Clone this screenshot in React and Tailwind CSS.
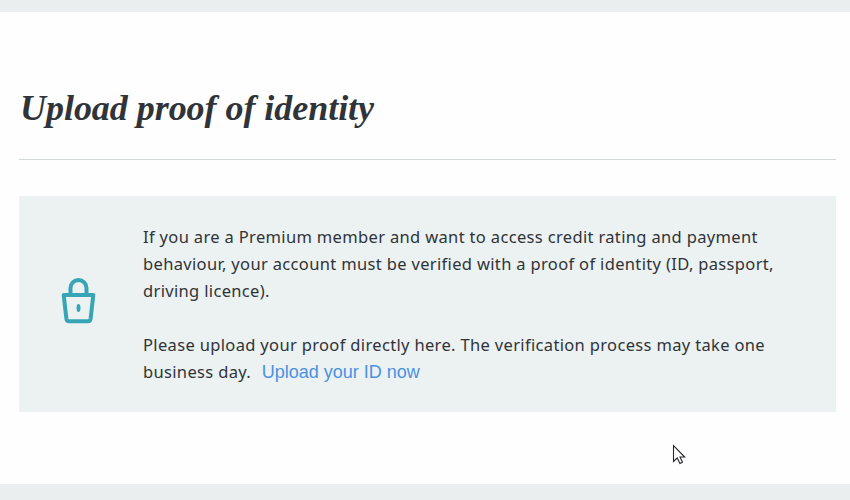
export default function App() {
  return (
    <main className="relative flex h-[500px] w-[850px] flex-col bg-[#eaeeee]">
      <section className="mt-3 h-[472px] bg-[#fefefe] pl-[19px] pr-[14px] pt-[72px]">
        <h1 className="h-[76px] whitespace-nowrap border-b border-[#d2d7d7] pl-px font-['Liberation_Serif',serif] text-[36px] font-bold italic leading-[48px] tracking-[-0.04px] text-[#303438]">
          Upload proof of identity
        </h1>
        <div className="mt-9 flex h-[216px] bg-[#ecf1f1] pt-[27px]">
          <svg className="ml-[41px] mt-[53px] h-[50px] w-[38px] shrink-0" viewBox="0 0 38 50" fill="none" stroke="#38a5b7" strokeWidth="4" strokeLinejoin="round">
            <path d="M10.5 19V12a8 8 0 0 1 16 0V19M3.7 19H33.3L30.6 42.8Q30.2 45.2 28 45.2H9Q6.8 45.2 6.4 42.8Z" />
            <ellipse cx="18.5" cy="32" rx="2" ry="4" fill="#38a5b7" stroke="none" />
          </svg>
          <div className="ml-[45px] whitespace-nowrap font-['Noto_Sans',sans-serif] text-[16.5px] leading-[27px] tracking-[0.34px] text-[#303438]">
            <p>If you are a Premium member and want to access credit rating and payment</p>
            <p>behaviour, your account must be verified with a proof of identity (ID, passport,</p>
            <p>driving licence).</p>
            <p className="mt-[27px]">Please upload your proof directly here. The verification process may take one</p>
            <p>business day. <a className="ml-1.5 font-['Liberation_Sans',sans-serif] text-[18px] leading-none tracking-normal text-[#4b91e2]">Upload your ID now</a></p>
          </div>
        </div>
      </section>
      <svg className="absolute left-[672px] top-[444px] h-[21px] w-[15px]" viewBox="0 0 15 21" fill="#fff" stroke="#27272c" strokeWidth="1.1">
        <path d="M1.5 1.5V17.5L5.2 14L8 19.5L10.5 18.3L8 13H12.7Z" />
      </svg>
    </main>
  );
}
